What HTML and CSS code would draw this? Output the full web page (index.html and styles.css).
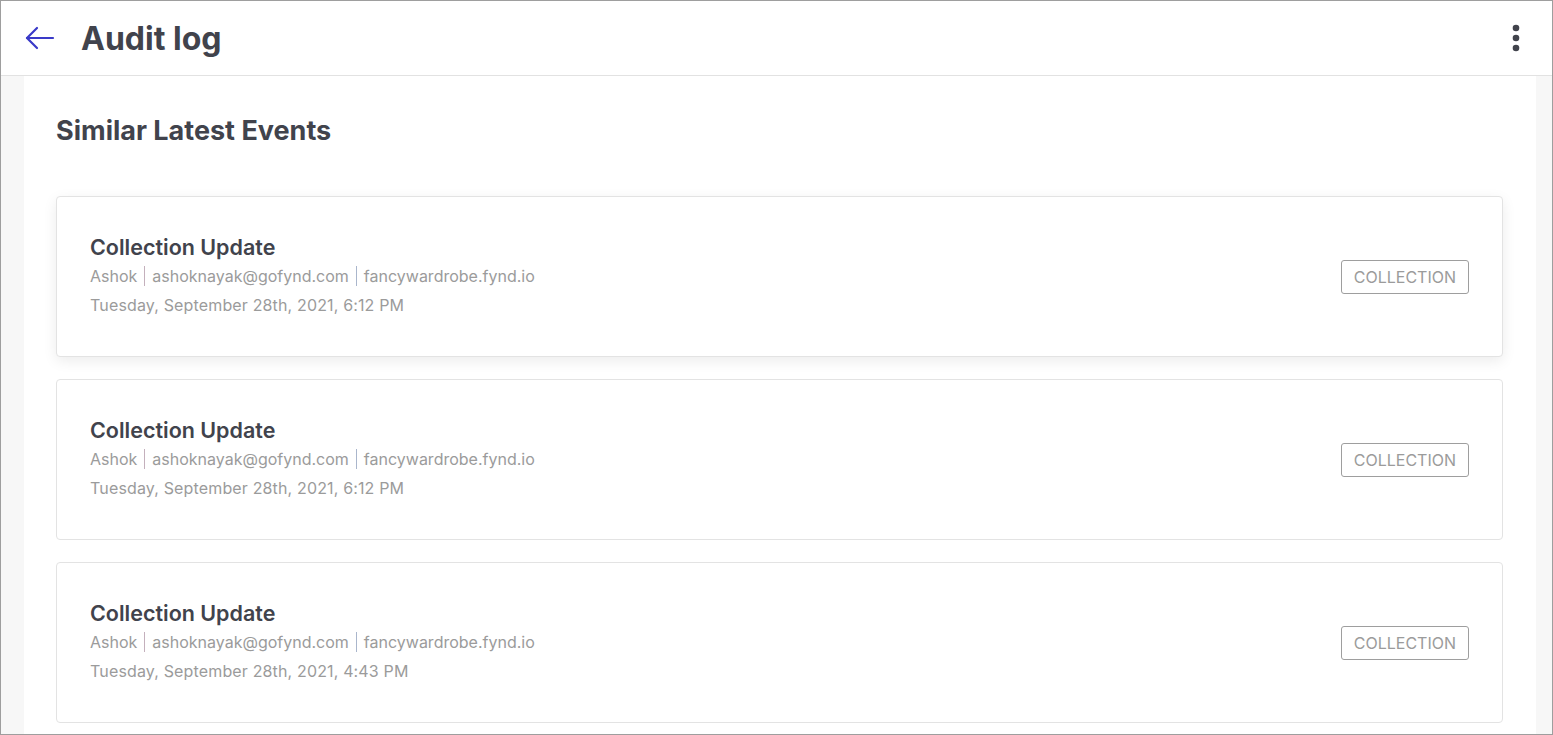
FILE: index.html
```html
<!DOCTYPE html>
<html lang="en">
<head>
    <meta charset="UTF-8">
    <meta name="viewport" content="width=device-width, initial-scale=1.0">
    <title>Audit log</title>
    <link rel="stylesheet" href="styles.css">
</head>
<body>

    <div class="frame">
        <header class="topbar">
            <a class="back" href="#" aria-label="Back">
                <svg width="30" height="24" viewBox="0 0 30 24" fill="none" stroke="#3a3ac8" stroke-width="2.2" stroke-linecap="round" stroke-linejoin="round">
                    <path d="M28 12H2"/>
                    <path d="M12 2L2 12l10 10"/>
                </svg>
            </a>
            <h1>Audit log</h1>
            <button class="more" aria-label="More">
                <svg width="8" height="28" viewBox="0 0 8 28" fill="#41434c">
                    <circle cx="4" cy="4" r="3.3"/>
                    <circle cx="4" cy="14" r="3.3"/>
                    <circle cx="4" cy="24" r="3.3"/>
                </svg>
            </button>
        </header>

        <main class="page">
            <section class="panel">
                <h2>Similar Latest Events</h2>

                <div class="event-list">
                    <div class="event active">
                        <div class="event-info">
                            <div class="event-title">Collection Update</div>
                            <div class="event-meta">
                                <span>Ashok</span><span class="sep"></span><span>ashoknayak@gofynd.com</span><span class="sep"></span><span>fancywardrobe.fynd.io</span>
                            </div>
                            <div class="event-date">Tuesday, September 28th, 2021, 6:12 PM</div>
                        </div>
                        <span class="tag">COLLECTION</span>
                    </div>

                    <div class="event">
                        <div class="event-info">
                            <div class="event-title">Collection Update</div>
                            <div class="event-meta">
                                <span>Ashok</span><span class="sep"></span><span>ashoknayak@gofynd.com</span><span class="sep"></span><span>fancywardrobe.fynd.io</span>
                            </div>
                            <div class="event-date">Tuesday, September 28th, 2021, 6:12 PM</div>
                        </div>
                        <span class="tag">COLLECTION</span>
                    </div>

                    <div class="event">
                        <div class="event-info">
                            <div class="event-title">Collection Update</div>
                            <div class="event-meta">
                                <span>Ashok</span><span class="sep"></span><span>ashoknayak@gofynd.com</span><span class="sep"></span><span>fancywardrobe.fynd.io</span>
                            </div>
                            <div class="event-date">Tuesday, September 28th, 2021, 4:43 PM</div>
                        </div>
                        <span class="tag">COLLECTION</span>
                    </div>
                </div>
            </section>
        </main>
    </div>

</body>
</html>
```

FILE: styles.css
```css
html, body { margin: 0; padding: 0; height: 100%; overflow: hidden; }
body { font-family: Inter, "Noto Sans", Arial, sans-serif; color: #41434c; background: #fff; }

.frame { height: 735px; box-sizing: border-box; border: 1px solid #9e9e9e; display: flex; flex-direction: column; overflow: hidden; }

.topbar { height: 74px; flex: none; display: flex; align-items: center; padding: 0 32px 0 24px; border-bottom: 1px solid #e2e2e2; background: #fff; }
.back { display: flex; width: 30px; height: 24px; }
.topbar h1 { margin: 0 0 0 26px; font-size: 32px; font-weight: 700; color: #41434c; flex: 1; }
.more { border: none; background: none; padding: 0; display: flex; cursor: pointer; }

.page { flex: 1; background: #f7f7f7; padding: 0 16px 0 23px; overflow: hidden; }
.panel { background: #fff; height: 100%; padding: 40px 33px 0 32px; box-sizing: border-box; }
.panel h2 { margin: 0 0 50px 0; font-size: 27px; font-weight: 700; line-height: 30px; color: #41434c; }

.event-list { display: flex; flex-direction: column; gap: 22px; }
.event { display: flex; align-items: center; justify-content: space-between; border: 1px solid #e3e3e3; border-radius: 4px; padding: 38px 33px 37px 33px; background: #fff; }
.event.active { box-shadow: 0 4px 14px rgba(0, 0, 0, 0.08); }

.event-title { font-size: 21.5px; font-weight: 600; line-height: 24px; color: #41434c; }
.event-meta { font-size: 16px; line-height: 30px; color: #9b9b9b; display: flex; align-items: center; margin-top: 2px; }
.event-meta .sep { display: inline-block; width: 0; height: 20px; border-left: 1px solid #c4b0bc; margin: 0 7px; }
.event-meta .sep + span + .sep { border-left-color: #aab6cc; }
.event-date { font-size: 16px; letter-spacing: 0.15px; line-height: 28px; color: #9b9b9b; }

.tag { border: 1px solid #9e9e9e; border-radius: 3px; padding: 0 12px; height: 32px; line-height: 32px; font-size: 16px; color: #9b9b9b; }
```
